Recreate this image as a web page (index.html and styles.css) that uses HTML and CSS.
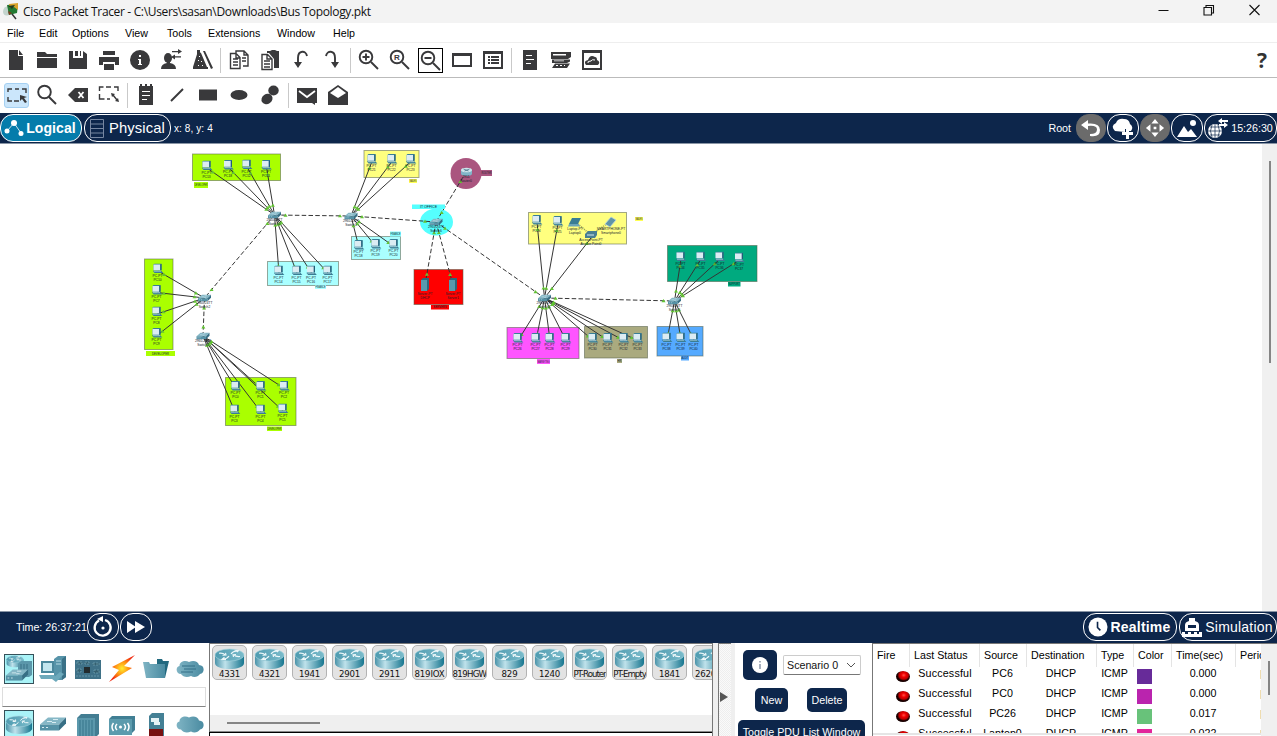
FILE: index.html
```html
<!DOCTYPE html>
<html lang="en">
<head>
<meta charset="utf-8">
<title>Cisco Packet Tracer</title>
<link rel="stylesheet" href="styles.css">
</head>
<body>
<svg class="defs" width="0" height="0" aria-hidden="true">
  <defs>
    <linearGradient id="teal" x1="0" x2="1"><stop offset="0" stop-color="#4a93a9"/><stop offset=".35" stop-color="#bfe2eb"/><stop offset="1" stop-color="#17768f"/></linearGradient>
    <linearGradient id="tealTop" x1="0" x2="1"><stop offset="0" stop-color="#4f9bb0"/><stop offset="1" stop-color="#7bbccb"/></linearGradient>
    <linearGradient id="tealDim" x1="0" x2="1"><stop offset="0" stop-color="#7fb4c4"/><stop offset="1" stop-color="#4a8ba1"/></linearGradient>
    <radialGradient id="spark"><stop offset="0" stop-color="#ffee30"/><stop offset=".5" stop-color="#ff9413"/><stop offset="1" stop-color="#ef2a10"/></radialGradient>
    <symbol id="router" viewBox="0 0 31 22">
      <path d="M1 7v8c0 8 29 8 29 0V7z" fill="url(#teal)"/>
      <ellipse cx="15.500" cy="7" rx="14.500" ry="6" fill="url(#tealTop)" stroke="#a5d3de" stroke-width=".6"/>
      <path d="M5 5.200q4-.5 6 1.500M8.500 7.200l3.500-.2-.5-2.200M26 8.500q-4 .5-6-1.500M22 6.500l-3 .2.500 2.300M9 11q4 0 6-3M17 6q2-3 6-3M20.500 2.200l4 .5-1.500 1.500M10.500 9.300l-2.500 2 4 .3" fill="none" stroke="#eef8fa" stroke-width="1.100"/>
    </symbol>
    <symbol id="switch" viewBox="0 0 28 15">
      <path d="M1 8L9 1h18l-7 7z" fill="#85b7c6"/><path d="M1 8h19v6H1z" fill="#5592a6"/><path d="M20 8l7-7v6l-7 7z" fill="#376f85"/>
      <path d="M8 5h5M14 3h5M13 6h4M3 11h2M7 11h2" stroke="#d7ecf2" stroke-width="1"/>
    </symbol>
    <symbol id="cloud" viewBox="0 0 28 20">
      <path d="M5 15C0 15-1 8 3.500 7c0-5 6-6 9.500-4 4-2 9-1 10 3 6 0 6 8 1 9-2 3-6 4-9 2-4 2-8 1-10-2z" fill="url(#tealDim)"/>
    </symbol>
    <symbol id="pc" viewBox="0 0 12 11">
      <path d="M1.500 1l1-.9h7v7H1.500z" fill="#387e97"/><path d="M1.500 1h6.800v5.700H1.500z" fill="#dcecf3"/>
      <path d="M8.300 1l1.200-.8v6.200L8.300 7z" fill="#205d77"/><path d="M.8 7.300h8.500l2 2.200H2.600z" fill="#397d94"/><path d="M2 7.700h7" stroke="#bde0ea" stroke-width=".7"/>
    </symbol>
    <symbol id="cylinder" viewBox="0 0 12 9">
      <path d="M.5 3v4c0 2.500 11 2.500 11 0V3z" fill="#81b4c8"/><ellipse cx="6" cy="3" rx="5.500" ry="2.300" fill="#d0e5ed"/><path d="M3 2l5 2M9 2L4 4" stroke="#46758a" stroke-width=".8"/>
    </symbol>
  </defs>
</svg>
<div class="app">
  <header class="titlebar">
    <svg class="app-icon" viewBox="0 0 18 20"><path d="M1 10q0-6 6-6v9q-5 2-6-3z" fill="#c3d4cd"/><path d="M5 3l11-1-1 9-8 2z" fill="#227a32"/><path d="M7 2l9-1v7l-4-3-4 1z" fill="#d8a12a"/><path d="M6 4l7-1-3 4z" fill="#203d20"/><path d="M10 12l4 5" stroke="#333" stroke-width="1.500"/><path d="M6 9l4 2-3 2z" fill="#7d3a1c"/></svg>
    <span class="title">Cisco Packet Tracer - C:\Users\sasan\Downloads\Bus Topology.pkt</span>
    <svg class="winctl" viewBox="0 0 110 12"><path d="M.5 6.500h10" stroke="#111"/><path d="M46 3.500h7.500V11H46zM48 3.200V1.500h7.500v7.500h-1.700" fill="none" stroke="#111" stroke-width="1.100"/><path d="M91.500 1l10 10m0-10l-10 10" stroke="#111" stroke-width="1.100"/></svg>
  </header>
  <nav class="menubar"><span>File</span><span>Edit</span><span>Options</span><span>View</span><span>Tools</span><span>Extensions</span><span>Window</span><span>Help</span></nav>

  <div class="toolbar main">
    <i class="tool"><svg viewBox="0 0 24 24"><path d="M5 2h9v6h5v14H5zM15 2l4 5h-4z"/></svg></i>
    <i class="tool"><svg viewBox="0 0 24 24"><path d="M2 4h8l2 2h10v3H2zM2 10h20v10H2z"/></svg></i>
    <i class="tool"><svg viewBox="0 0 24 24"><path d="M3 3h4v7h10V3l4 3v15H3zM9 3h3v5H9zM14 3h1v5h-1z"/></svg></i>
    <i class="tool"><svg viewBox="0 0 24 24"><path d="M6 3h12v4H6zM2 9h20v8h-4v-3H6v3H2zM7 16h10v6H7z"/></svg></i>
    <i class="tool"><svg viewBox="0 0 24 24"><circle cx="12" cy="12" r="10"/><path class="cut" d="M11 7h2v2h-2zM10 11h3v5h1v1h-4v-1h1v-4h-1z"/></svg></i>
    <i class="tool"><svg viewBox="0 0 24 24"><ellipse cx="9" cy="10" rx="4" ry="5"/><path d="M2 21q0-5 6-6v-2h3v2q6 1 6 6z"/><path d="M13 3h6V1l4 2.500L19 6V4.300h-6zM22 9.500h-6V11.500L12 9l4-2.500V8.300h6z"/></svg></i>
    <i class="tool"><svg viewBox="0 0 24 24"><path d="M8 3l3 2 6 14h1v2H3v-2zM13 3l2 0 8 17-2 1z"/><path d="M7 2h3v4H7z"/><path class="cut" d="M9 8h1v1H9zM8 12h1v1H8zM11 13h1v1h-1zM8 17h1v1H8zM12 17h1v1h-1z"/></svg></i>
    <b class="sep"></b>
    <i class="tool"><svg viewBox="0 0 24 24"><path class="line" d="M9 6V3h8l4 4v11h-5M17 3v4h4M13 14v6.500H3.500v-15H9l4 4v5M9 6v4h4M6 11h5M6 14h5M6 17h5M15 10h4M15 13h4"/></svg></i>
    <i class="tool"><svg viewBox="0 0 24 24"><path d="M9 5V3h3l2-1h3l2 1h2v17h-5v-9l-5-6z"/><path class="line" d="M9.500 6.500H4v15h10V11zM9 6.500V11h5M6 13h6M6 16h6M6 19h6"/></svg></i>
    <i class="tool"><svg viewBox="0 0 24 24"><path class="line thick" d="M18 8c-1-6-9-6-9 2v6"/><path d="M5 14h8l-4 6z"/></svg></i>
    <i class="tool"><svg viewBox="0 0 24 24"><path class="line thick" d="M6 8c1-6 9-6 9 2v6"/><path d="M11 14h8l-4 6z"/></svg></i>
    <b class="sep"></b>
    <i class="tool"><svg viewBox="0 0 24 24"><circle class="line thick" cx="9" cy="9" r="6.300"/><path class="line thick" d="M14 14l7 7M5.500 9h7M9 5.500v7"/></svg></i>
    <i class="tool"><svg viewBox="0 0 24 24"><circle class="line thick" cx="9" cy="9" r="6.300"/><path class="line thick" d="M14 14l7 7"/><text x="6" y="12" class="glyph">R</text></svg></i>
    <i class="tool framed"><svg viewBox="0 0 24 24"><circle class="line thick" cx="9" cy="9" r="6.300"/><path class="line thick" d="M14 14l7 7M5.500 9h7"/></svg></i>
    <i class="tool"><svg viewBox="0 0 24 24"><path fill-rule="evenodd" d="M2 5h20v14H2zM4 8v9h16V8z"/></svg></i>
    <i class="tool"><svg viewBox="0 0 24 24"><path fill-rule="evenodd" d="M2 3h20v18H2zM4 6v13h16V6zM7 8h2v2H7zM10 8h8v2h-8zM7 11h2v2H7zM10 11h8v2h-8zM7 14h2v2H7zM10 14h8v2h-8z"/></svg></i>
    <b class="sep"></b>
    <i class="tool"><svg viewBox="0 0 24 24"><path d="M5 2h14v20H5z"/><path class="cut" d="M8 7h6v1H8zM8 11h8v1H8zM8 15h5v1H8z"/></svg></i>
    <i class="tool"><svg viewBox="0 0 24 24"><path fill-rule="evenodd" d="M2 4h20v5l-3 2H2zM4 6v1.500h13V6z"/><path d="M3 11.500h18v2l-3 1.500H3zM6 15.500h15l-3 4.500H3z"/><path class="cut" d="M5 12.500h10v.7H5zM7 17h2v1H7zM11 17h2v1h-2zM15 17h1v1h-1z"/></svg></i>
    <i class="tool"><svg viewBox="0 0 24 24"><path fill-rule="evenodd" d="M2 2h20v20H2zM4 5v15h16V5z"/><path d="M6 17q-3-4 2-5 2-6 7-3 2 0 2 3 4 2 1 5z"/><path class="cutline thin" d="M8 15q-1-2 3-2 1-2 4-1"/></svg></i>
    <span class="help">?</span>
  </div>

  <div class="toolbar second">
    <i class="tool chosen"><svg viewBox="0 0 24 24"><path class="line" d="M3 8V5h4M10 5h4M17 5h4v4M3 13v4h4M9 17h5"/><path d="M15 11l7 2-3 1 3 4-2 1-3-4-2 2z"/></svg></i>
    <i class="tool"><svg viewBox="0 0 24 24"><circle class="line thick" cx="9.500" cy="9" r="6.300"/><path class="line thick" d="M14 14l7 7"/></svg></i>
    <i class="tool"><svg viewBox="0 0 24 24"><path d="M2 12l7-7h13v14H9z"/><path class="cutline" d="M12.500 9l5 6m0-6l-5 6"/></svg></i>
    <i class="tool"><svg viewBox="0 0 24 24"><path class="line" d="M2.500 8V4h4M9 4h5M17 4h4v4M2.500 11v5h5M10 16h3M16 12l4 5"/><path d="M14 10l4 1-3 3zM22 19l-4-1 3-3z"/></svg></i>
    <b class="sep"></b>
    <i class="tool"><svg viewBox="0 0 24 24"><path d="M5 3h14v19H5zM6 1h2v4H6zM11 1h2v4h-2zM16 1h2v4h-2z"/><path class="cut" d="M8 8h8v1H8zM8 12h8v1H8zM8 16h5v1H8z"/></svg></i>
    <i class="tool"><svg viewBox="0 0 24 24"><path class="line thick" d="M6 18L18 6"/></svg></i>
    <i class="tool"><svg viewBox="0 0 24 24"><path d="M3 6.500h18v11H3z"/></svg></i>
    <i class="tool"><svg viewBox="0 0 24 24"><ellipse cx="12" cy="12" rx="8.500" ry="5"/></svg></i>
    <i class="tool"><svg viewBox="0 0 24 24"><ellipse cx="15.500" cy="7.500" rx="5.200" ry="5"/><ellipse cx="9" cy="16" rx="5.800" ry="5" transform="rotate(-35 9 16)"/></svg></i>
    <b class="sep"></b>
    <i class="tool"><svg viewBox="0 0 24 24"><path d="M2 5h20v15h-2v2l-3-2H2z"/><path class="cutline" d="M4 8l8 6 8-6"/></svg></i>
    <i class="tool"><svg viewBox="0 0 24 24"><path d="M2 9l10-7 10 7v13H2z"/><path class="cut" d="M4 10l8-6 8 6-8 5z"/></svg></i>
  </div>

  <div class="navbar">
    <div class="pill logical"><svg width="20" height="20" viewBox="0 0 20 20"><path d="M3 13L10 5l7 10" fill="none" stroke="#fff" stroke-width=".8"/><circle cx="3" cy="13" r="2.500"/><circle cx="10" cy="5" r="3"/><circle cx="17" cy="15.500" r="2.500"/></svg><strong>Logical</strong></div>
    <div class="pill physical"><svg width="14" height="19" viewBox="0 0 14 19"><path d="M.5.500h13v18H.5zM1 5h12M1 9.500h12M1 14h12" fill="none" stroke="#7787a1"/></svg><span>Physical</span></div>
    <span class="coords">x: 8, y: 4</span>
    <span class="root">Root</span>
    <div class="pill round gray"><svg width="22" height="20" viewBox="0 0 22 20"><path d="M1 7l7-5v3.500q12-1 12 6.500t-10 6v-2q7 0 7-4.500t-9-3.500V12z"/></svg></div>
    <div class="pill round"><svg width="24" height="22" viewBox="0 0 24 22"><path d="M4 14q-5-5 1-8Q7 1 13 2q5 0 6 5 4 3 1 7h-3v-2h-3v3z"/><path d="M15 12h3v3h4v3h-4v4h-3v-4h-4v-3h4z"/></svg></div>
    <div class="pill round gray"><svg width="20" height="20" viewBox="0 0 22 22"><path d="M11 1l4 5H7zM11 21l4-5H7zM1 11l5-4v8zM21 11l-5-4v8zM9.500 9.500h3v3h-3z"/></svg></div>
    <div class="pill round"><svg width="22" height="20" viewBox="0 0 22 20"><path d="M1 19l7-11 4 6 3-3 6 8z"/><circle cx="17" cy="5" r="3"/></svg></div>
    <div class="pill clock"><svg width="22" height="22" viewBox="0 0 22 22"><circle cx="8" cy="14" r="7"/><path d="M1 14h14M3 10h10M3 18h10M8 7v14M5 8q-3 6 0 12M11 8q3 6 0 12" fill="none" stroke="#0d264b" stroke-width=".7"/><path d="M11 4l4-3v2h6v2h-6v2zM21 8l-4-3v2h-5v2h5v2z"/></svg><span>15:26:30</span></div>
  </div>

  <main class="workspace">
    <svg id="topology" width="1262" height="467" viewBox="0 144 1262 467"></svg>
    <div class="vscroll"><b></b></div>
  </main>

  <div class="timebar">
    <span class="time">Time: 26:37:21</span>
    <div class="pill round"><svg width="22" height="22" viewBox="0 0 22 22"><path d="M7 4.500A8 8 0 1 0 13 4" fill="none" stroke="#fff" stroke-width="2.300"/><path d="M5 3l6-3v6z"/><circle cx="11" cy="12" r="1.600"/></svg></div>
    <div class="pill round"><svg width="18" height="12" viewBox="0 0 18 12"><path d="M0 0l9 6-9 6zM8 0l10 6-10 6z"/></svg></div>
    <div class="pill realtime"><svg width="20" height="20" viewBox="0 0 21 21"><circle cx="10.500" cy="10.500" r="10"/><path d="M10 5v6l3 3" fill="none" stroke="#0d264b" stroke-width="1.700"/></svg><strong>Realtime</strong></div>
    <div class="pill simulation"><svg width="20" height="20" viewBox="0 0 20 20"><path d="M3 14V8q0-3 4-4V1h6v3q4 1 4 4v6z"/><path d="M0 15h3v2h3v-2h3v2h3v-2h3v2h2v-2h3v5H0z"/><path d="M6 8h8v3H6z" fill="#0d264b"/></svg><span>Simulation</span></div>
  </div>

  <footer class="dock">
    <section class="categories">
      <div class="cat-row">
        <i class="cat active"><svg viewBox="0 0 30 30"><use href="#router" x="2" y="1" width="18" height="13"/><path d="M14 10l3-3h11v14l-3 2H14z" fill="#5b97aa"/><path d="M17 10v10M20 10v10M23 10v10" stroke="#3b7085"/><use href="#switch" x="1" y="14" width="24" height="14"/></svg></i>
        <i class="cat"><svg viewBox="0 0 30 30"><path d="M16 5l4-3h8v21l-4 3h-8z" fill="#5794a9"/><path d="M24 5l4-3v21l-4 3z" fill="#3a7187"/><path d="M18 7h5M18 10h5" stroke="#b8dbe5"/><path d="M3 7h13v12H3z" fill="#4a879c"/><path d="M5 9h9v8H5z" fill="#c2e6ef"/><path d="M1 21h15l4 4H3zM14 25l8-7 4 2-8 8z" fill="#6da9bb"/></svg></i>
        <i class="cat"><svg viewBox="0 0 30 30"><path d="M2 6h26v19H2z" fill="#3f7187"/><path d="M11 13h6v6h-6z" fill="#222b2d"/><path d="M4 8h5v2H4zM12 8h4v2h-4zM20 9h6v2h-6zM21 16h5v3h-5zM4 15h4v3H4zM3 22h24" fill="#35606f" stroke="#7eafbf" stroke-width=".6" stroke-dasharray="2 1"/></svg></i>
        <i class="cat"><svg viewBox="0 0 30 30"><path d="M28 1L5 13l7 3L2 28l23-14-8-2z" fill="url(#spark)"/></svg></i>
        <i class="cat"><svg viewBox="0 0 30 30"><path d="M16 5h5l1 2h6l-4 17h-8z" fill="#22697f"/><path d="M2 8h6l1 2h15v14H5z" fill="url(#tealDim)"/></svg></i>
        <i class="cat"><svg viewBox="0 0 30 30"><use href="#cloud" x="1" y="5" width="28" height="20"/><path d="M7 12h13M9 15h12M6 18h12" stroke="#326f86"/></svg></i>
      </div>
      <div class="search"></div>
      <div class="cat-row">
        <i class="cat active"><svg viewBox="0 0 30 30"><use href="#router" x="1" y="4" width="28" height="22"/></svg></i>
        <i class="cat"><svg viewBox="0 0 30 30"><use href="#switch" x="1" y="5" width="28" height="18"/></svg></i>
        <i class="cat"><svg viewBox="0 0 30 30"><path d="M4 8l4-4h18v20l-4 4H4z" fill="#437d92"/><path d="M4 8h18v20H4z" fill="#5b98ac"/><path d="M7 10v18M10 10v18M13 10v18M16 10v18M19 10v18" stroke="#37748a"/></svg></i>
        <i class="cat"><svg viewBox="0 0 30 30"><path d="M2 9l3-3h23v14l-3 3H2z" fill="#417f94"/><path d="M2 9h23v16H2z" fill="#5c9bad"/><path d="M10 14q-3 3 0 6M6.500 13q-3 4 0 8M17 14q3 3 0 6M20.500 13q3 4 0 8" fill="none" stroke="#fff" stroke-width="1.500"/><circle cx="13.500" cy="17" r="1.500" fill="#fff"/></svg></i>
        <i class="cat"><svg viewBox="0 0 30 30"><path d="M8 6l3-3h12v27H8z" fill="#448095"/><path d="M8 19h14v11H8z" fill="#781010"/><path d="M10 8h8v4h-8zM13 12h6v3h-6z" fill="#e6f2f5"/></svg></i>
        <i class="cat"><svg viewBox="0 0 30 30"><use href="#cloud" x="1" y="4" width="28" height="21"/></svg></i>
      </div>
    </section>

    <section class="devices">
      <div class="device-list">
        <div class="device"><svg><use href="#router"/></svg><span>4331</span></div>
        <div class="device"><svg><use href="#router"/></svg><span>4321</span></div>
        <div class="device"><svg><use href="#router"/></svg><span>1941</span></div>
        <div class="device"><svg><use href="#router"/></svg><span>2901</span></div>
        <div class="device"><svg><use href="#router"/></svg><span>2911</span></div>
        <div class="device"><svg><use href="#router"/></svg><span>819IOX</span></div>
        <div class="device"><svg><use href="#router"/></svg><span class="tight">819HGW</span></div>
        <div class="device"><svg><use href="#router"/></svg><span>829</span></div>
        <div class="device"><svg><use href="#router"/></svg><span>1240</span></div>
        <div class="device"><svg><use href="#router"/></svg><span class="tighter">PT-Router</span></div>
        <div class="device"><svg><use href="#router"/></svg><span class="tighter">PT-Empty</span></div>
        <div class="device"><svg><use href="#router"/></svg><span>1841</span></div>
        <div class="device"><svg><use href="#router"/></svg><span class="left">2620XM</span></div>
      </div>
      <div class="hscroll"><b></b></div>
      <div class="device-name"></div>
    </section>

    <div class="splitter"><svg width="8" height="10" viewBox="0 0 8 10"><path d="M0 0l8 5-8 5z" fill="#555"/></svg></div>

    <section class="scenario">
      <div class="line-one">
        <div class="btn info"><svg width="18" height="18" viewBox="0 0 18 18"><circle cx="9" cy="9" r="8" fill="#fff"/><path d="M9 5v1.500M9 8v5" stroke="#8994a8" stroke-width="1.500"/></svg></div>
        <div class="select"><span>Scenario 0</span><svg width="10" height="6" viewBox="0 0 10 6"><path d="M1 1l4 4 4-4" fill="none" stroke="#555"/></svg></div>
      </div>
      <div class="line-two"><div class="btn">New</div><div class="btn">Delete</div></div>
      <div class="btn wide">Toggle PDU List Window</div>
    </section>

    <section class="pdu">
      <div class="table">
        <div class="tr th"><span>Fire</span><span>Last Status</span><span>Source</span><span>Destination</span><span>Type</span><span>Color</span><span>Time(sec)</span><span>Periodic</span></div>
        <div class="tr"><span class="fire"><b></b></span><span>Successful</span><span>PC6</span><span>DHCP</span><span>ICMP</span><span><b class="swatch violet"></b></span><span>0.000</span><span class="edge"></span></div>
        <div class="tr"><span class="fire"><b></b></span><span>Successful</span><span>PC0</span><span>DHCP</span><span>ICMP</span><span><b class="swatch magenta"></b></span><span>0.000</span><span class="edge"></span></div>
        <div class="tr"><span class="fire"><b></b></span><span>Successful</span><span>PC26</span><span>DHCP</span><span>ICMP</span><span><b class="swatch green"></b></span><span>0.017</span><span class="edge"></span></div>
        <div class="tr"><span class="fire"><b></b></span><span>Successful</span><span>Laptop0</span><span>DHCP</span><span>ICMP</span><span><b class="swatch pink"></b></span><span>0.022</span><span class="edge"></span></div>
      </div>
      <div class="vscroll small"><b></b></div>
    </section>
  </footer>
</div>
<script src="topology.js"></script>
</body>
</html>
```
FILE: styles.css
```css
* { box-sizing: border-box; }
body { margin: 0; overflow: hidden; background: #fff; color: #111; font: 10.7px "Liberation Sans", Arial, sans-serif; }
i { font-style: normal; }
.defs { position: absolute; }
.app { width: 1277px; height: 736px; display: flex; flex-direction: column; overflow: hidden; }
.app > * { flex: none; }

.titlebar { height: 23px; background: #f3f3f3; display: flex; align-items: center; padding-left: 2px; }
.app-icon { width: 18px; height: 20px; margin-right: 3px; }
.title { font: 12px "Open Sans", "Noto Sans", sans-serif; letter-spacing: -.34px; white-space: nowrap; flex: 1; }
.winctl { width: 110px; height: 12px; margin-right: 9px; margin-top: -3px; }

.menubar { height: 20px; border-bottom: 1px solid #eee; padding-left: 7px; display: grid; grid-template-columns: 32px 33px 53px 42px 41px 69px 56px 60px; align-items: center; color: #000; }

.toolbar { display: flex; align-items: center; height: 35px; background: #fff; }
.toolbar.main { border-bottom: 1px solid #bbb; }
.toolbar.second { padding: 0 0 1px 1px; }
.toolbar.second .tool { margin-left: 3px; }
.toolbar.second .chosen { margin: 0 2px 0 3px; }
.tool { width: 25px; height: 25px; margin: 0 3px; display: grid; place-items: center; flex: none; }
.tool svg { width: 24px; height: 24px; fill: #39393b; }
.tool .line { fill: none; stroke: #39393b; stroke-width: 1.4; }
.tool .thick { stroke-width: 1.9; }
.tool .cut { fill: #fff; }
.tool .cutline { fill: none; stroke: #fff; stroke-width: 1.8; }
.tool .cutline.thin { stroke-width: 1; }
.glyph { font: bold 8px "Liberation Sans", sans-serif; }
.framed { border: 1px solid #000; }
.chosen { background: #cbe6fb; border: 1px solid #a5d0f2; border-radius: 3px; }
.sep { width: 1px; height: 25px; background: #c9c9c9; margin: 0 2px 0 3px; flex: none; }
.help { margin-left: auto; margin-right: 10px; font: bold 21px "Open Sans", "Noto Sans", sans-serif; color: #333; }

.navbar, .timebar { background: #0d264b; color: #fff; display: flex; align-items: center; }
.navbar { height: 31px; border-bottom: 1px solid #8995a5; }
.pill { height: 28px; border: 1px solid #fff; border-radius: 13px; display: flex; align-items: center; justify-content: center; flex: none; white-space: nowrap; }
.pill svg { fill: #fff; flex: none; }
.logical { width: 82px; background: #047cab; font-size: 14px; gap: 2px; letter-spacing: .1px; padding-right: 2px; }
.physical { width: 87px; margin-left: 2px; font-size: 14.8px; gap: 5px; letter-spacing: .1px; }
.coords { margin-left: 3px; font-size: 10px; letter-spacing: .1px; }
.root { margin-left: auto; margin-right: 4px; }
.round { width: 32px; }
.gray { width: 30px; background: #6b6b6b; border-color: #6b6b6b; margin: 0 1px; }
.clock { width: 73px; margin-left: 1px; gap: 2px; padding-right: 1px; }

.workspace { height: 467px; display: flex; background: #fff; }
.vscroll { width: 15px; background: #f0f0f0; display: flex; justify-content: center; padding-top: 17px; }
.vscroll b { width: 2px; height: 202px; background: #858585; }
#topology { display: block; flex: none; }
#topology text { font: 3.3px "Liberation Sans", sans-serif; text-anchor: middle; fill: #14202a; }
.zone { stroke: #56604a; stroke-opacity: .55; stroke-width: 1; }
.link { stroke: #353535; stroke-width: 1; }
.dashed { stroke-dasharray: 4.5 2.3; }
.status { fill: #62c233; }

.timebar { height: 32px; border-top: 1px solid #8995a5; padding: 0 0 1px 16px; }
.time { width: 71px; white-space: nowrap; }
.timebar .round + .round { margin-left: 1px; }
.realtime { width: 94px; margin-left: auto; gap: 3px; font-size: 14px; letter-spacing: .2px; padding-right: 2px; }
.simulation { width: 98px; margin-left: 2px; gap: 3px; font-size: 14px; letter-spacing: .2px; padding-right: 1px; }

.dock { height: 93px; display: flex; overflow: hidden; }
.dock > section { flex: none; }
.categories { width: 209px; padding: 11px 0 0 2px; display: flex; flex-direction: column; }
.categories > * { flex: none; }
.cat-row { display: flex; gap: 4px; padding-left: 2px; }
.cat { width: 30px; height: 30px; margin-right: .3px; }
.cat svg { display: block; width: 100%; height: 100%; }
.cat.active { background: #a9f3f7; box-shadow: inset 0 0 0 1px #36515a; }
.search { width: 204px; height: 20px; margin: 3px 0; border: 1px solid #ddd; border-bottom-color: #858585; }

.devices { width: 504px; border: 1px solid #777; border-bottom: 0; display: flex; flex-direction: column; }
.device-list { height: 71px; display: flex; gap: 5px; padding: 1px 0 0 2px; overflow: hidden; }
.device { width: 35px; height: 35px; flex: none; border: 1px solid #b3b3b3; border-radius: 5px; background: #e3e3e3; overflow: hidden; display: flex; flex-direction: column; align-items: center; }
.device svg { width: 31px; height: 22px; margin-top: 2px; flex: none; }
.device span { font: 8.6px/8px "DejaVu Sans", sans-serif; white-space: nowrap; letter-spacing: -.2px; }
.device .tight { letter-spacing: -.7px; }
.device .tighter { letter-spacing: -1px; }
.device .left { align-self: flex-start; padding-left: 2px; }
.hscroll { height: 17px; background: #efefef; padding: 7px 0 0 17px; border-bottom: 1px solid #888; }
.hscroll b { display: block; width: 93px; height: 2px; background: #858585; }
.device-name { flex: 1; border-top: 1px solid #000; border-left: 1px solid #000; margin-left: -1px; }
.splitter { width: 22px; border: solid #efefef; border-width: 0 4px 0 5px; box-shadow: inset 1px 1px #777; background: repeating-conic-gradient(#eee 0 25%, #fafafa 0 50%) 0 0 / 2px 2px; display: flex; align-items: center; padding: 14px 0 0 2px; }

.scenario { width: 137px; padding: 7px 0 0 3px; display: flex; flex-direction: column; }
.scenario > * { flex: none; }
.line-one { display: flex; align-items: center; padding-left: 5px; gap: 6px; }
.btn { background: #0d264b; color: #fff; border-radius: 5px; display: grid; place-items: center; height: 24px; width: 40px; white-space: nowrap; }
.btn.info { width: 34px; height: 30px; }
.select { width: 78px; height: 20px; border: 1px solid #ccc; border-bottom-color: #777; border-radius: 2px; display: flex; align-items: center; justify-content: space-between; padding: 0 4px 0 3px; white-space: nowrap; }
.line-two { display: flex; gap: 19px; padding: 8px 0 8px 17px; }
.line-two .btn:first-child { width: 33px; }
.btn.wide { width: 127px; }

.pdu { width: 405px; border: 1px solid #777; border-width: 1px 0 0 1px; display: flex; }
.table { width: 388px; height: 91px; overflow: hidden; border-bottom: 2px solid #e5e5e5; color: #000; }
.tr { display: grid; grid-template-columns: 36px 70px 47px 70px 37px 38px 64px 60px; height: 20px; text-align: center; line-height: 14px; white-space: nowrap; }
.tr.th { height: 22px; text-align: left; line-height: 23px; }
.tr:not(.th) > span:nth-child(2) { padding-left: 2px; letter-spacing: .2px; }
.th span { padding-left: 4px; border-left: 1px solid #e4e4e4; }
.th span:first-child { border-left: 0; }
.tr > span { min-width: 0; }
.fire { padding: 5px 0 0 23px; }
.fire b { display: block; width: 14px; height: 11px; border-radius: 50%; background: radial-gradient(ellipse at 55% 38%, #ff5147 0, #e00 22%, #b00 42%, #160000 58%); }
.swatch { display: block; width: 15px; height: 15px; margin: 3px 0 0 4px; }
.violet { background: #672b99; }
.magenta { background: #ba24ae; }
.green { background: #68c27a; }
.pink { background: #e2259b; }
.edge { background: linear-gradient(#eedcb0, #eedcb0) 25px 4px / 1px 9px no-repeat; }
.vscroll.small { width: 16px; }
.vscroll.small b { height: 34px; }
```
FILE: topology.js
```js
const svg = document.getElementById('topology');
const out = [];

const zones = [
  [192.5, 154, 88, 26.5, '#aaff00'], [364, 150.5, 55, 27, '#ffff7f'],
  [351.5, 236.5, 49, 23, '#aaffff'], [267.5, 261.5, 71, 24, '#aaffff'],
  [414, 269.5, 49, 35, '#ff0000'], [144.5, 259, 28.500, 90.5, '#aaff00'],
  [225.5, 377.5, 70.5, 48, '#aaff00'], [528.5, 212.5, 98, 31.5, '#ffff7f'],
  [507, 327.5, 72, 31, '#ff55ff'], [584.5, 326.5, 63, 31.5, '#aaaa7f'],
  [667.5, 245.5, 89.5, 36, '#00aa7f'], [657, 326.5, 46, 29.5, '#55aaff']
];
zones.forEach(([x, y, w, h, c]) => out.push(`<rect class="zone" x="${x}" y="${y}" width="${w}" height="${h}" fill="${c}"/>`));
out.push('<circle cx="466" cy="173.500" r="15.500" fill="#aa557f"/><ellipse cx="436.500" cy="222" rx="16.500" ry="13.500" fill="#55ffff"/>');

const tags = [
  [194, 182, 14, 6, '#aaff00', 'DEVELOPER'], [409, 179, 8, 4, '#ffff55', 'SALES'],
  [481, 170, 11, 6, '#aa557f', 'ROUTER'], [412, 204.500, 33, 4.500, '#55ffff', 'IT OFFICE'],
  [390, 231.500, 11, 5, '#88ffff', 'FINANCE'], [315, 284.500, 11, 4.500, '#aaffff', 'FINANCE'],
  [431, 305, 18, 4.500, '#ff0000', 'SERVERS'], [146, 351, 29, 5, '#aaff00', 'DEVELOPER'],
  [267, 426.500, 15, 4.500, '#aaff00', 'DEVELOPER'], [635, 217, 8, 4, '#ffff55', 'SALES'],
  [537, 359, 13, 5, '#ff55ff', 'MARKETING'], [617, 359, 5, 4, '#aaaa7f', 'HR'],
  [728, 282, 12.500, 4.500, '#00aa7f', 'SUPPORT'], [681, 356, 8, 4.500, '#55aaff', 'AUDIT']
];

const hubs = { a: [274.5, 215], b: [351, 216], c: [204.5, 298], d: [203, 336], e: [544.5, 298], f: [674.5, 301], g: [436, 222] };
const pcs = {
  a: [[206, 166, 'PC13'], [227.5, 165.5, 'PC18'], [246, 165, 'PC12'], [265.5, 165.5, 'PC11'], [278, 271, 'PC14'], [296, 271, 'PC15'], [310.5, 271, 'PC16'], [327, 271, 'PC17']],
  b: [[371, 159.5, 'PC21'], [391, 159.5, 'PC22'], [410, 159.5, 'PC23'], [358, 245.5, 'PC18'], [375, 244.5, 'PC19'], [393, 244.5, 'PC20']],
  c: [[157, 269, 'PC10'], [156, 290.5, 'PC7'], [156, 312, 'PC8'], [156, 333.5, 'PC9']],
  d: [[235, 386.5, 'PC0'], [260, 386.5, 'PC1'], [283.5, 386.5, 'PC2'], [234, 410, 'PC3'], [260, 410, 'PC4'], [282, 409, 'PC5']],
  e: [[536, 220.5, 'PC24'], [557, 221.5, 'PC25'], [517, 338.5, 'PC26'], [535, 338.5, 'PC27'], [549, 338.5, 'PC28'], [565, 338.5, 'PC29'], [592, 338.5, 'PC30'], [607, 338.5, 'PC31'], [623, 338.5, 'PC32'], [637, 338.5, 'PC33']],
  f: [[680, 257, 'PC34'], [700, 257, 'PC35'], [719, 257, 'PC36'], [738.5, 258, 'PC37'], [666, 338, 'PC38'], [680, 338, 'PC39'], [693, 338, 'PC40']]
};

function mark(x, y) {
  out.push(`<path class="status" d="M${x - 2} ${y + 1.5}h4l-2-3.200z"/>`);
}
function link(p, q, dashed, startGap = 7, endGap = 10) {
  const dx = q[0] - p[0], dy = q[1] - p[1], len = Math.hypot(dx, dy);
  out.push(`<line class="link${dashed ? ' dashed' : ''}" x1="${p[0]}" y1="${p[1]}" x2="${q[0]}" y2="${q[1]}"/>`);
  mark(p[0] + dx * startGap / len, p[1] + dy * startGap / len);
  mark(q[0] - dx * endGap / len, q[1] - dy * endGap / len);
}

const { a, b, c, d, e, f, g } = hubs;
Object.keys(pcs).forEach(k => pcs[k].forEach(p => link([p[0] + 1, p[1] + 2], hubs[k], false)));
link([591, 238], e, false, 7, 12);
[[a, b], [a, c], [b, g], [g, e], [e, f], [g, [466, 172]], [g, [425, 285]], [g, [453, 285]]].forEach(([p, q]) => link(p, q, true, 11, 11));
link(c, d, true, 10, 9);
out.push('<path d="M578 224l13 11 17-12" fill="none" stroke="#9ca055" stroke-width="1.500" stroke-dasharray="1 1"/>');

function caption(x, y, kind, name) {
  out.push(`<text x="${x}" y="${y}">${kind}</text><text x="${x}" y="${y + 4}">${name}</text>`);
}
Object.values(pcs).flat().forEach(([x, y, name]) => {
  out.push(`<use href="#pc" x="${x - 5}" y="${y - 5.5}" width="12" height="11"/>`);
  caption(x + 0.5, y + 7.5, 'PC-PT', name);
});
Object.values(hubs).forEach(([x, y], i) => {
  out.push(`<use href="#switch" x="${x - 7}" y="${y - 4}" width="14" height="8"/>`);
  caption(x, y + 6, '2960-24TT', 'Switch' + i);
});
out.push('<use href="#cylinder" x="460.500" y="167" width="12" height="9"/>');
caption(466, 178, '2911', 'Router0');
[[425, 285], [453, 285]].forEach(([x, y], i) => {
  out.push(`<path d="M${x - 4} ${y - 5}l2-2h6v11l-2 2h-6z" fill="#2d687c"/><path d="M${x - 4} ${y - 5}h6v11h-6z" fill="#5999ad"/>`);
  caption(x, y + 10, 'Server-PT', i ? 'Server1' : 'DHCP');
});
out.push('<path d="M572 218h9l-3 6h-9z" fill="#397d94"/><path d="M569 224h10l1 2.500h-12z" fill="#6ba5b8"/><path d="M605 224l6-7 5 3-6 7z" fill="#6094a8" stroke="#b7d4dd" stroke-width=".8"/><path d="M585 234l3-3h9v4l-2 3h-10z" fill="#487f93"/><path d="M587 235h7" stroke="#d6e9ee"/>');
caption(575, 230, 'Laptop-PT', 'Laptop0');
caption(611, 229.5, 'SMARTPHONE-PT', 'Smartphone0');
caption(591, 241, 'AccessPoint-PT', 'Access Point0');
tags.forEach(([x, y, w, h, col, t]) => out.push(`<rect x="${x}" y="${y}" width="${w}" height="${h}" fill="${col}"/><text x="${x + w / 2}" y="${y + h / 2 + 1.2}" textLength="${Math.min(w - 1, t.length * 1.9)}" lengthAdjust="spacingAndGlyphs">${t}</text>`));
svg.innerHTML = out.join('');
```
